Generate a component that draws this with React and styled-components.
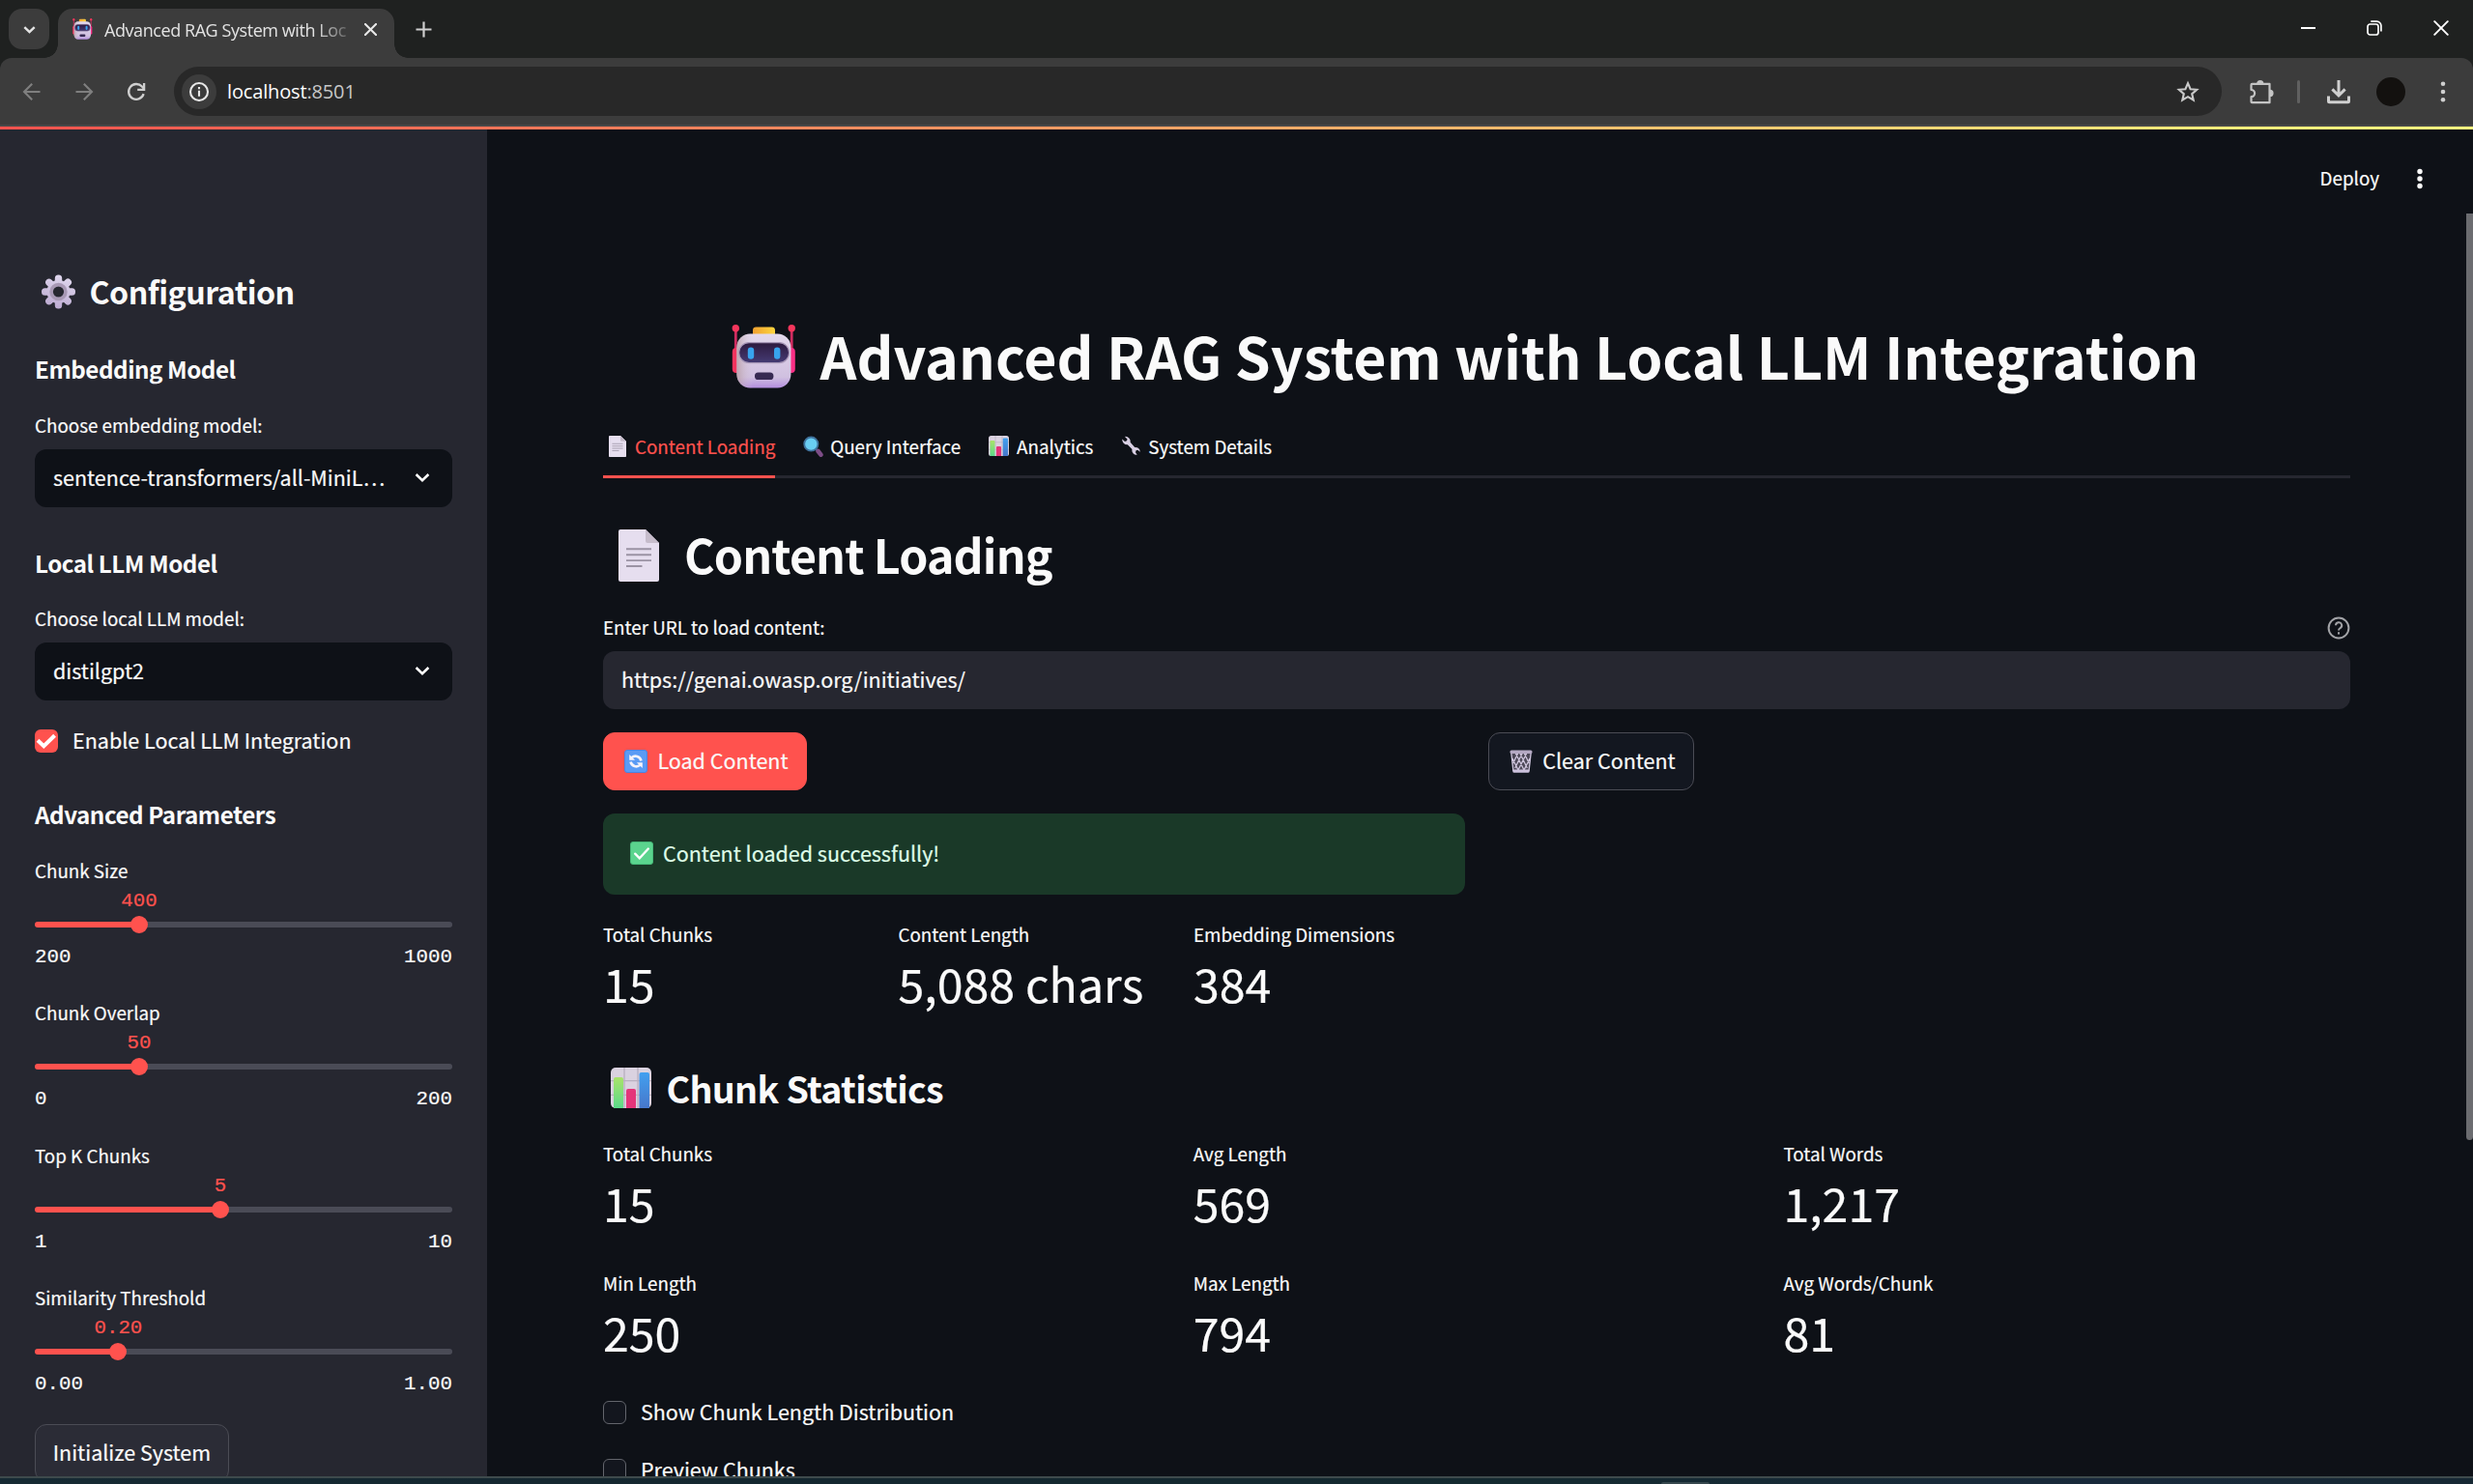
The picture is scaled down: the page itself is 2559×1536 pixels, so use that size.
import React, { useId } from 'react';
import styled, { createGlobalStyle } from 'styled-components';

const sans = '"Noto Sans CJK SC", "Noto Sans", sans-serif';
const mono = '"Liberation Mono", monospace';
const chromeFont = '"Open Sans", "Noto Sans", sans-serif';
const red = '#ff524e';

const GlobalStyle = createGlobalStyle`
  * { box-sizing: border-box; }
  html, body { margin: 0; padding: 0; background: #0e1117; overflow: hidden; }
  svg { display: block; flex: none; }
`;

const Window = styled.div`
  width: 2559px;
  height: 1536px;
  display: flex;
  flex-direction: column;
  overflow: hidden;
  color: #fafafa;
  font-family: ${sans};
`;

/* ---------- browser frame ---------- */

const TabStrip = styled.div`
  height: 60px;
  flex: none;
  background: #1f2120;
  display: flex;
  align-items: flex-start;
  padding-top: 9px;
`;

const TabSearch = styled.div`
  width: 42px;
  height: 42px;
  margin-left: 9px;
  border-radius: 14px;
  background: #3c3c3c;
  display: flex;
  align-items: center;
  justify-content: center;
`;

const BrowserTab = styled.div`
  position: relative;
  width: 348px;
  height: 51px;
  margin-left: 9px;
  padding: 0 18px 9px 15px;
  border-radius: 15px 15px 0 0;
  background: #3c3c3c;
  display: flex;
  align-items: center;
  &::before,
  &::after {
    content: '';
    position: absolute;
    bottom: 0;
    width: 14px;
    height: 14px;
  }
  &::before {
    left: -14px;
    background: radial-gradient(circle at 0 0, transparent 13.5px, #3c3c3c 14px);
  }
  &::after {
    right: -14px;
    background: radial-gradient(circle at 100% 0, transparent 13.5px, #3c3c3c 14px);
  }
`;

const TabTitle = styled.div`
  width: 254px;
  margin-left: 12px;
  margin-top: 2px;
  white-space: nowrap;
  font: 400 18px/24px ${chromeFont};
  letter-spacing: -0.43px;
  color: #e3e3e3;
  mask-image: linear-gradient(90deg, #000 86%, transparent 103%);
`;

const TabClose = styled.div`
  margin-left: auto;
`;

const NewTab = styled.div`
  margin: 13px 0 0 22px;
`;

const WindowControls = styled.div`
  display: flex;
  gap: 53px;
  margin: 12px 25px 0 auto;
`;

const Toolbar = styled.div`
  height: 71px;
  flex: none;
  background: #1f2120;
  border-bottom: 2px solid #484848;
`;

const ToolbarInner = styled.div`
  height: 69px;
  padding: 9px 28px 0 23px;
  border-radius: 12px 12px 0 0;
  background: #3c3c3c;
  display: flex;
  align-items: flex-start;
`;

const NavButtons = styled.div`
  height: 51px;
  width: 157px;
  display: flex;
  align-items: center;
  gap: 34px;
`;

const AddressBar = styled.div`
  width: 2119px;
  height: 51px;
  border-radius: 26px;
  background: #282828;
  display: flex;
  align-items: center;
  padding: 0 23px 0 8px;
`;

const SiteInfo = styled.div`
  width: 36px;
  height: 36px;
  border-radius: 50%;
  background: #3c3c3c;
  display: flex;
  align-items: center;
  justify-content: center;
`;

const Address = styled.div`
  margin-left: 11px;
  flex: 1;
  font: 400 20px/30px ${chromeFont};
  letter-spacing: -0.15px;
  color: #fff;
`;

const Port = styled.span`
  color: #c7c7c7;
`;

const ToolbarActions = styled.div`
  height: 51px;
  margin-left: auto;
  display: flex;
  align-items: center;
`;

const ActionDivider = styled.div`
  width: 3px;
  height: 24px;
  margin: 0 28px 0 24px;
  border-radius: 2px;
  background: #606060;
`;

const Avatar = styled.div`
  width: 30px;
  height: 30px;
  margin: 0 36px 0 27px;
  border-radius: 50%;
  background: #13110f;
`;

const Decoration = styled.div`
  height: 3px;
  flex: none;
  background: linear-gradient(90deg, ${red}, #fffd80);
`;

/* ---------- app ---------- */

const AppBody = styled.div`
  height: 1394px;
  flex: none;
  display: flex;
  overflow: hidden;
  background: #0e1117;
  -webkit-text-stroke: 0.2px;
`;

const Sidebar = styled.aside`
  width: 504px;
  flex: none;
  padding: 145px 36px 0;
  background: #262730;
  display: flex;
  flex-direction: column;
`;

const SidebarTitle = styled.h2`
  margin: 0;
  height: 44px;
  padding-left: 6px;
  display: flex;
  align-items: center;
  gap: 13.5px;
  font-size: 32.2px;
  line-height: 44px;
  font-weight: 700;
  letter-spacing: -0.016em;
  -webkit-text-stroke: 0;
  svg { margin-top: 2px; }
`;

const SectionTitle = styled.h3`
  margin: ${(p) => p.$top}px 0 0;
  height: 32px;
  font-size: 24.2px;
  line-height: 32px;
  font-weight: 700;
  letter-spacing: -0.0195em;
  -webkit-text-stroke: 0;
`;

const FieldLabel = styled.div`
  height: 30px;
  font-size: 18.8px;
  line-height: 30px;
  white-space: nowrap;
`;

const Field = styled.div`
  margin-top: ${(p) => p.$top}px;
`;

const Select = styled.div`
  height: 60px;
  margin-top: 10px;
  padding: 0 23px 2px 19px;
  border-radius: 12px;
  background: #0e1117;
  display: flex;
  align-items: center;
  justify-content: space-between;
  font-size: 21.5px;
  line-height: 36px;
  white-space: nowrap;
`;

const CheckRow = styled.label`
  height: 36px;
  margin-top: ${(p) => p.$top}px;
  display: flex;
  align-items: center;
  gap: 15px;
  font-size: 21.5px;
  line-height: 36px;
  white-space: nowrap;
`;

const CheckBox = styled.span`
  width: 24px;
  height: 24px;
  margin-top: 2px;
  border-radius: 6px;
  border: ${(p) => (p.$checked ? 'none' : '1.5px solid #63656c')};
  background: ${(p) => (p.$checked ? red : '#13161e')};
  display: flex;
  align-items: center;
  justify-content: center;
`;

const SliderList = styled.div`
  margin-top: 27px;
  display: flex;
  flex-direction: column;
  gap: 29.4px;
`;

const SliderField = styled.div`
  height: 118px;
`;

const SliderValue = styled.div`
  position: relative;
  left: ${(p) => p.$at}%;
  width: 80px;
  height: 24px;
  margin: 5px 0 0 -40px;
  text-align: center;
  font: 400 20.8px/24px ${mono};
  color: ${red};
`;

const Track = styled.div`
  position: relative;
  height: 6px;
  margin-top: 9px;
  border-radius: 3px;
  background: linear-gradient(90deg, ${red} ${(p) => p.$at}%, #4a4b56 ${(p) => p.$at}%);
`;

const Thumb = styled.div`
  position: absolute;
  left: calc(${(p) => p.$at}% - 9px);
  top: -6px;
  width: 18px;
  height: 18px;
  border-radius: 50%;
  background: ${red};
`;

const SliderRange = styled.div`
  margin-top: 19px;
  height: 24px;
  display: flex;
  justify-content: space-between;
  font: 400 20.8px/24px ${mono};
`;

const Button = styled.button`
  height: 60px;
  flex: none;
  padding: 0 0 2px ${(p) => (p.$side ? 0 : 3)}px;
  width: ${(p) => p.$width}px;
  border-radius: 12px;
  border: 1.5px solid ${(p) => (p.$primary ? red : '#4b4c55')};
  background: ${(p) => (p.$primary ? red : p.$side ? '#2b2c36' : '#131720')};
  color: #fafafa;
  font: 400 21.5px/36px ${sans};
  -webkit-text-stroke: 0.2px;
  display: flex;
  align-items: center;
  justify-content: center;
  gap: 10px;
  white-space: nowrap;
  svg { margin-top: 1px; }
`;

const SidebarAction = styled.div`
  margin-top: 28px;
`;

const Main = styled.main`
  flex: 1;
  display: flex;
  flex-direction: column;
  align-items: stretch;
`;

const AppHeader = styled.header`
  height: 87px;
  flex: none;
  padding: 35px 52px 0 0;
  display: flex;
  justify-content: flex-end;
  align-items: flex-start;
  gap: 39px;
  font-size: 18.8px;
  line-height: 30px;
`;

const MenuDots = styled.div`
  height: 32px;
  display: flex;
  align-items: center;
`;

const ScrollArea = styled.div`
  flex: 1;
  display: flex;
  justify-content: space-between;
`;

const ScrollThumb = styled.div`
  width: 7px;
  height: 959px;
  background: #6b6c70;
  border-radius: 0 0 4px 4px;
`;

const Page = styled.div`
  width: 1808px;
  margin-left: 120px;
  padding-top: 106px;
`;

const PageTitle = styled.h1`
  margin: 0;
  height: 80px;
  padding-left: 133px;
  display: flex;
  align-items: center;
  gap: 23.5px;
  font-size: 59.1px;
  line-height: 79px;
  font-weight: 700;
  white-space: nowrap;
  -webkit-text-stroke: 0;
  svg { margin-top: 3px; }
`;

const Tabs = styled.nav`
  height: 88px;
  display: flex;
  align-items: stretch;
  gap: 24px;
  padding-top: 40px;
  border-bottom: 3px solid #262730;
`;

const TabItem = styled.div`
  height: 48px;
  margin-bottom: -3px;
  padding-left: ${(p) => p.$inset || 5}px;
  display: flex;
  align-items: flex-start;
  gap: ${(p) => p.$gap}px;
  font-size: 18.8px;
  line-height: 29px;
  color: ${(p) => (p.$active ? red : '#fafafa')};
  border-bottom: 3px solid ${(p) => (p.$active ? red : 'transparent')};
  svg { margin-top: 4px; }
`;

const PageHeading = styled.h2`
  margin: 46px 0 0;
  height: 64px;
  padding-left: 16px;
  display: flex;
  align-items: center;
  gap: 26px;
  font-size: 48.3px;
  line-height: 64px;
  font-weight: 700;
  letter-spacing: -0.0175em;
  -webkit-text-stroke: 0;
  svg { margin-top: 3px; }
`;

const LabelRow = styled.div`
  height: 30px;
  margin-top: 29px;
  display: flex;
  align-items: center;
  justify-content: space-between;
  svg { margin-top: 2px; }
`;

const UrlInput = styled.div`
  height: 60px;
  margin-top: 10px;
  padding: 0 19px;
  border-radius: 12px;
  background: #262730;
  font-size: 21.5px;
  line-height: 58px;
`;

const ButtonRow = styled.div`
  margin-top: 24px;
  display: grid;
  grid-template-columns: 892px 892px;
  gap: 24px;
`;

const SuccessAlert = styled.div`
  width: 892px;
  height: 84px;
  margin-top: 24px;
  padding: 0 28px 2px;
  border-radius: 12px;
  background: #1a3928;
  color: #dffde9;
  display: flex;
  align-items: center;
  gap: 10px;
  font-size: 21.5px;
  line-height: 36px;
`;

const MetricGrid = styled.div`
  margin-top: ${(p) => p.$top}px;
  display: grid;
  grid-template-columns: repeat(3, ${(p) => p.$column}px);
  row-gap: 37px;
`;

const Metric = styled.div`
  height: 97px;
`;

const MetricValue = styled.div`
  margin-top: 3px;
  height: 64px;
  font-size: 48.3px;
  line-height: 64px;
  white-space: nowrap;
`;

const SubHeading = styled.h3`
  margin: 52px 0 0;
  height: 50px;
  padding-left: 8px;
  display: flex;
  align-items: center;
  gap: 15.5px;
  font-size: 37.6px;
  line-height: 50px;
  font-weight: 700;
  letter-spacing: -0.018em;
  -webkit-text-stroke: 0;
`;

const Taskbar = styled.div`
  height: 8px;
  flex: none;
  border-top: 2px solid #3e4a4c;
  background: linear-gradient(90deg, #162a33, #14272f 30%, #142a30 62%, #18293a 85%, #162833);
  display: flex;
  justify-content: flex-start;
`;

const TaskbarItem = styled.div`
  width: 50px;
  height: 2px;
  margin: 4px 0 0 1719px;
  border-radius: 4px 4px 0 0;
  background: #36474d;
`;

/* ---------- drawings ---------- */

const Chevron = ({ size = 16, color = '#fafafa', width = 2.6 }) => (
  <svg width={size} height={size} viewBox="0 0 16 16" fill="none" stroke={color} strokeWidth={width}>
    <path d="M1.6 5l6.4 6.2L14.4 5" />
  </svg>
);

const CrossIcon = ({ size, width, color = '#fff' }) => (
  <svg width={size} height={size} viewBox="0 0 16 16" fill="none" stroke={color} strokeWidth={width} strokeLinecap="round">
    <path d="M1.2 1.2l13.6 13.6M14.8 1.2L1.2 14.8" />
  </svg>
);

const PlusIcon = () => (
  <svg width="17" height="17" viewBox="0 0 17 17" stroke="#cfcfcf" strokeWidth="2.2">
    <path d="M8.5 0.5v16M0.5 8.5h16" />
  </svg>
);

const MinimizeIcon = () => (
  <svg width="15" height="16" viewBox="0 0 15 16" stroke="#fff" strokeWidth="2">
    <path d="M0 8h15" />
  </svg>
);

const RestoreIcon = () => (
  <svg width="16" height="16" viewBox="0 0 16 16" fill="none" stroke="#fff" strokeWidth="1.7">
    <rect x="1" y="4" width="11" height="11" rx="2.5" />
    <path d="M4.3 1.2h6.2a4.4 4.4 0 0 1 4.4 4.4v5.8" />
  </svg>
);

const Arrow = ({ flip }) => (
  <svg width="20" height="20" viewBox="0 0 20 20" fill="none" stroke="#7f7f7f" strokeWidth="2.1">
    {flip ? <path d="M1.5 10h16M9.8 1.8l8.2 8.2-8.2 8.2" /> : <path d="M18.5 10h-16M10.2 1.8L2 10l8.2 8.2" />}
  </svg>
);

const ReloadIcon = () => (
  <svg width="20" height="20" viewBox="0 0 20 20" fill="none" stroke="#cfcfcf" strokeWidth="2.3">
    <path d="M17.6 12.2A7.9 7.9 0 1 1 15.9 4.6L18 7" />
    <path d="M18.1 1v6.9h-6.9" />
  </svg>
);

const InfoIcon = () => (
  <svg width="22" height="22" viewBox="0 0 22 22" fill="none" stroke="#e8e8e8" strokeWidth="2.1">
    <circle cx="11" cy="11" r="9" />
    <path d="M11 9.8v6M11 6v2.2" />
  </svg>
);

const StarIcon = () => (
  <svg width="24" height="24" viewBox="0 0 24 24" fill="none" stroke="#c9c9c9" strokeWidth="2.1">
    <path d="M12 3.2l2.6 6 6.6.6-5 4.3 1.5 6.4L12 17.1l-5.7 3.4 1.5-6.4-5-4.3 6.6-.6z" />
  </svg>
);

const PuzzleIcon = () => (
  <svg width="26" height="26" viewBox="0 0 26 26">
    <path d="M3.5 4.8h18v19.4h-18q-1 0-1-1v-5a3.6 3.6 0 0 0 0-7.2V5.8q0-1 1-1z" fill="none" stroke="#c4c4c4" strokeWidth="2.2" strokeLinejoin="round" />
    <path d="M8.2 4.5a3.6 3.6 0 0 1 7.2 0zM22 10.8a3.6 3.6 0 0 1 0 7.2z" fill="#c4c4c4" />
  </svg>
);

const DownloadIcon = () => (
  <svg width="24" height="26" viewBox="0 0 24 26" fill="none" stroke="#cfcfcf" strokeWidth="3">
    <path d="M12 1v15.5M5.4 10.4l6.6 6.6 6.6-6.6" />
    <path d="M1.5 17.5v5.2q0 1 1 1h19q1 0 1-1v-5.2" />
  </svg>
);

const DotsIcon = ({ color, step, r }) => (
  <svg width="6" height="26" viewBox="0 0 6 26" fill={color}>
    <circle cx="3" cy={13 - step} r={r} />
    <circle cx="3" cy="13" r={r} />
    <circle cx="3" cy={13 + step} r={r} />
  </svg>
);

const CheckMark = () => (
  <svg width="24" height="24" viewBox="0 0 24 24" fill="none" stroke="#fff" strokeWidth="4">
    <path d="M3 11.3l6.3 6L20.6 6.3" />
  </svg>
);

const HelpIcon = () => (
  <svg width="24" height="24" viewBox="0 0 24 24" fill="none" stroke="#a2a3a7" strokeWidth="2">
    <circle cx="12" cy="12" r="10.4" />
    <path d="M9 9.3a3.1 3.1 0 1 1 4.6 2.7c-1.1.7-1.6 1.2-1.6 2.4" />
    <path d="M12 16.3v2.1" />
  </svg>
);

const GearIcon = () => {
  const id = useId();
  return (
    <svg width="37" height="36" viewBox="0 0 36 36">
      <defs>
        <linearGradient id={id} gradientUnits="userSpaceOnUse" x1="24" y1="0" x2="12" y2="36">
          <stop offset="0" stopColor="#e0d8ee" />
          <stop offset="1" stopColor="#bba9d0" />
        </linearGradient>
        <clipPath id={`${id}c`}>
          {[0, 45, 90, 135].map((a) => (
            <rect key={a} x="14.3" y="0.5" width="7.4" height="35" rx="3.5" transform={`rotate(${a} 18 18)`} />
          ))}
          <circle cx="18" cy="18" r="12" />
        </clipPath>
      </defs>
      <rect width="36" height="36" fill={`url(#${id})`} clipPath={`url(#${id}c)`} />
      <circle cx="18" cy="18" r="7.4" fill="none" stroke="#a899b5" strokeWidth="3.6" />
      <circle cx="18" cy="18" r="5.6" fill="#262730" />
    </svg>
  );
};

const RobotIcon = ({ width = 68, height = 66 }) => {
  const id = useId();
  return (
    <svg width={width} height={height} viewBox="0 0 68 66" preserveAspectRatio="none">
      <defs>
        <linearGradient id={`${id}f`} x1="0" y1="0" x2="0" y2="1">
          <stop offset="0" stopColor="#e3d9ec" />
          <stop offset="0.8" stopColor="#d0c0e0" />
          <stop offset="1" stopColor="#b48ede" />
        </linearGradient>
        <linearGradient id={`${id}s`} x1="0" y1="0" x2="1" y2="0">
          <stop offset="0" stopColor="#b59a9e" stopOpacity="0.75" />
          <stop offset="0.3" stopColor="#d8c8dc" stopOpacity="0" />
        </linearGradient>
        <linearGradient id={`${id}v`} x1="0" y1="0" x2="0" y2="1">
          <stop offset="0" stopColor="#2d1a3e" />
          <stop offset="1" stopColor="#453b74" />
        </linearGradient>
        <linearGradient id={`${id}y`} x1="0" y1="0" x2="1" y2="0">
          <stop offset="0" stopColor="#f0a030" />
          <stop offset="1" stopColor="#fcd53e" />
        </linearGradient>
      </defs>
      <path d="M4.3 4v26M62.2 4v26" stroke="#cf2c60" strokeWidth="2.8" />
      <circle cx="4.3" cy="3.8" r="3.7" fill="#f5365c" />
      <circle cx="62.2" cy="3.8" r="3.7" fill="#f5365c" />
      <rect x="0.8" y="24" width="9" height="26" rx="4" fill="#f2335d" />
      <rect x="56.8" y="24" width="9" height="26" rx="4" fill="#fa2f86" />
      <rect x="22" y="2.5" width="23" height="10" rx="3.4" fill={`url(#${id}y)`} />
      <rect x="5.4" y="9.5" width="56" height="56" rx="14" fill={`url(#${id}f)`} />
      <rect x="5.4" y="9.5" width="56" height="56" rx="14" fill={`url(#${id}s)`} />
      <rect x="7.6" y="18.6" width="52" height="21" rx="10.5" fill={`url(#${id}v)`} stroke="#a898b8" strokeWidth="1.2" />
      <rect x="16.8" y="23.4" width="6.4" height="12.4" rx="3.2" fill="#38a4ee" />
      <rect x="44" y="23.4" width="6.4" height="12.4" rx="3.2" fill="#38a4ee" />
      <rect x="24" y="49.4" width="19.4" height="7.6" rx="3.6" fill="#372a52" />
    </svg>
  );
};

const DocumentIcon = ({ width, height }) => (
  <svg width={width} height={height} viewBox="0 0 42 54" preserveAspectRatio="none">
    <path d="M2 0h26l14 14v38q0 2-2 2H2q-2 0-2-2V2q0-2 2-2z" fill="#e6deef" />
    <path d="M28 0l14 14H30q-2 0-2-2z" fill="#c6bccb" />
    <path d="M8 20.3h26M8 26.3h26M8 32.1h26M8 38h16.5" stroke="#9b93a4" strokeWidth="1.9" />
  </svg>
);

const MagnifierIcon = () => (
  <svg width="21" height="22" viewBox="0 0 21 22">
    <path d="M13.5 14l2.8 3" stroke="#5b6a96" strokeWidth="2.4" />
    <path d="M15.6 16l2.8 3.6" stroke="#7d4d87" strokeWidth="4.6" strokeLinecap="round" />
    <circle cx="8.3" cy="8.6" r="7.1" fill="#69cdf2" stroke="#3f729d" strokeWidth="1.8" />
  </svg>
);

const ChartIcon = ({ size }) => {
  const id = useId();
  return (
    <svg width={size} height={size} viewBox="0 0 42 42">
      <defs>
        <linearGradient id={`${id}g`} x1="0" y1="0" x2="0" y2="1">
          <stop offset="0" stopColor="#a9e36a" />
          <stop offset="1" stopColor="#5bd98a" />
        </linearGradient>
        <linearGradient id={`${id}b`} x1="0" y1="0" x2="0" y2="1">
          <stop offset="0" stopColor="#42a0f0" />
          <stop offset="1" stopColor="#4777ca" />
        </linearGradient>
      </defs>
      <rect width="42" height="42" rx="5" fill="#dad2e0" />
      <path d="M14 0v42M28 0v42M0 13.6h42M0 28.4h42" stroke="#b9b0c0" strokeWidth="1.3" />
      <path d="M3 42V12q0-2 2-2h6q2 0 2 2v30z" fill={`url(#${id}g)`} />
      <path d="M16 42V24q0-2 2-2h6q2 0 2 2v18z" fill="#e4357a" />
      <path d="M29.5 42V7q0-2 2-2h6.5q2 0 2 2v35z" fill={`url(#${id}b)`} />
    </svg>
  );
};

const WrenchIcon = () => (
  <svg width="21" height="21" viewBox="0 0 21 21">
    <path d="M1.3 3.6L4 6 6 5.3 6.5 3.5 4 0.9A5 5 0 0 1 9.600 6.800L14.200 12A4.600 4.600 0 0 1 19.700 16.700L17.300 14.700 15.500 15.300 15 17.300 16.700 19.700A4.600 4.600 0 0 1 11.500 14L6.800 9.200A5 5 0 0 1 1.300 3.600z" fill="#d8cfe3" />
  </svg>
);

const RefreshIcon = () => (
  <svg width="24" height="24" viewBox="0 0 24 24">
    <rect x="0.5" y="0.5" width="23" height="23" rx="2.5" fill="#5a9bf5" stroke="#4a83e2" />
    <g fill="none" stroke="#f4f2fa" strokeWidth="2.7">
      <path d="M7.5 8.2c3.4-2.7 9-1.6 9.9 3.3" />
      <path d="M16.5 15.8c-3.4 2.7-9 1.6-9.9-3.3" />
    </g>
    <path d="M5.2 5v5.8h5.9zM18.8 19v-5.8h-5.9z" fill="#f4f2fa" />
  </svg>
);

const GreenCheckIcon = () => (
  <svg width="24" height="24" viewBox="0 0 24 24">
    <rect x="0.5" y="0.5" width="23" height="23" rx="2.5" fill="#5bd48e" stroke="#46b878" />
    <path d="M5.2 12.6l4.6 4.7 9-9.8" fill="none" stroke="#fff" strokeWidth="2.3" strokeLinecap="round" />
  </svg>
);

const TrashIcon = () => (
  <svg width="24" height="24" viewBox="0 0 24 24">
    <path d="M1.5 2.5h21L20.3 23H3.7z" fill="#4d4858" />
    <path d="M1.8 3l2.1 19M22.2 3l-2.1 19M6 3l9.5 19M10.5 3l7.8 16M15 3l5.2 11M18 3L8.5 22M13.5 3L5.7 19M9 3L3.8 14M3 9l6.5 13M21 9l-6.500 13" stroke="#cfc5dd" strokeWidth="1.3" fill="none" />
    <rect x="0.5" y="0.5" width="23" height="3.4" rx="1.5" fill="#b5a9c4" />
    <rect x="3.4" y="20.5" width="17.2" height="3.2" rx="1.3" fill="#cdc2dd" />
  </svg>
);

/* ---------- content ---------- */

const sliders = [
  { label: 'Chunk Size', value: '400', at: 25, min: '200', max: '1000' },
  { label: 'Chunk Overlap', value: '50', at: 25, min: '0', max: '200' },
  { label: 'Top K Chunks', value: '5', at: 44.44, min: '1', max: '10' },
  { label: 'Similarity Threshold', value: '0.20', at: 20, min: '0.00', max: '1.00' },
];

const loadMetrics = [
  ['Total Chunks', '15'],
  ['Content Length', '5,088 chars'],
  ['Embedding Dimensions', '384'],
];

const chunkMetrics = [
  ['Total Chunks', '15'],
  ['Avg Length', '569'],
  ['Total Words', '1,217'],
  ['Min Length', '250'],
  ['Max Length', '794'],
  ['Avg Words/Chunk', '81'],
];

const Metrics = ({ items, column, top }) => (
  <MetricGrid $column={column} $top={top}>
    {items.map(([label, value]) => (
      <Metric key={label}>
        <FieldLabel>{label}</FieldLabel>
        <MetricValue>{value}</MetricValue>
      </Metric>
    ))}
  </MetricGrid>
);

const Slider = ({ label, value, at, min, max }) => (
  <SliderField>
    <FieldLabel>{label}</FieldLabel>
    <SliderValue $at={at}>{value}</SliderValue>
    <Track $at={at}>
      <Thumb $at={at} />
    </Track>
    <SliderRange>
      <span>{min}</span>
      <span>{max}</span>
    </SliderRange>
  </SliderField>
);

export default function App() {
  return (
    <Window>
      <GlobalStyle />
      <TabStrip>
        <TabSearch>
          <Chevron size={13} color="#e3e3e3" width={3} />
        </TabSearch>
        <BrowserTab>
          <RobotIcon width={21} height={22} />
          <TabTitle>Advanced RAG System with Loc</TabTitle>
          <TabClose>
            <CrossIcon size={13} width={2.6} color="#e8e8e8" />
          </TabClose>
        </BrowserTab>
        <NewTab>
          <PlusIcon />
        </NewTab>
        <WindowControls>
          <MinimizeIcon />
          <RestoreIcon />
          <CrossIcon size={16} width={1.9} />
        </WindowControls>
      </TabStrip>
      <Toolbar>
        <ToolbarInner>
          <NavButtons>
            <Arrow />
            <Arrow flip />
            <ReloadIcon />
          </NavButtons>
          <AddressBar>
            <SiteInfo>
              <InfoIcon />
            </SiteInfo>
            <Address>
              localhost<Port>:8501</Port>
            </Address>
            <StarIcon />
          </AddressBar>
          <ToolbarActions>
            <PuzzleIcon />
            <ActionDivider />
            <DownloadIcon />
            <Avatar />
            <DotsIcon color="#cfcfcf" step={8.3} r={2.3} />
          </ToolbarActions>
        </ToolbarInner>
      </Toolbar>
      <Decoration />
      <AppBody>
        <Sidebar>
          <SidebarTitle>
            <GearIcon />
            Configuration
          </SidebarTitle>
          <SectionTitle $top={43}>Embedding Model</SectionTitle>
          <Field $top={27}>
            <FieldLabel>Choose embedding model:</FieldLabel>
            <Select>
              sentence-transformers/all-MiniL…
              <Chevron />
            </Select>
          </Field>
          <SectionTitle $top={42}>Local LLM Model</SectionTitle>
          <Field $top={26}>
            <FieldLabel>Choose local LLM model:</FieldLabel>
            <Select>
              distilgpt2
              <Chevron />
            </Select>
          </Field>
          <CheckRow $top={23}>
            <CheckBox $checked>
              <CheckMark />
            </CheckBox>
            Enable Local LLM Integration
          </CheckRow>
          <SectionTitle $top={43}>Advanced Parameters</SectionTitle>
          <SliderList>
            {sliders.map((s) => (
              <Slider key={s.label} {...s} />
            ))}
          </SliderList>
          <SidebarAction>
            <Button $width={201} $side>Initialize System</Button>
          </SidebarAction>
        </Sidebar>
        <Main>
          <AppHeader>
            <span>Deploy</span>
            <MenuDots>
              <DotsIcon color="#fafafa" step={7.5} r={2.7} />
            </MenuDots>
          </AppHeader>
          <ScrollArea>
            <Page>
              <PageTitle>
                <RobotIcon />
                Advanced RAG System with Local LLM Integration
              </PageTitle>
              <Tabs>
                <TabItem $active $inset={6} $gap={9}>
                  <DocumentIcon width={18} height={22} />
                  Content Loading
                </TabItem>
                <TabItem $gap={7}>
                  <MagnifierIcon />
                  Query Interface
                </TabItem>
                <TabItem $gap={8}>
                  <ChartIcon size={21} />
                  Analytics
                </TabItem>
                <TabItem $gap={7}>
                  <WrenchIcon />
                  System Details
                </TabItem>
              </Tabs>
              <PageHeading>
                <DocumentIcon width={42} height={54} />
                Content Loading
              </PageHeading>
              <LabelRow>
                <FieldLabel>Enter URL to load content:</FieldLabel>
                <HelpIcon />
              </LabelRow>
              <UrlInput>https://genai.owasp.org/initiatives/</UrlInput>
              <ButtonRow>
                <Button $width={211} $primary>
                  <RefreshIcon />
                  Load Content
                </Button>
                <Button $width={213}>
                  <TrashIcon />
                  Clear Content
                </Button>
              </ButtonRow>
              <SuccessAlert>
                <GreenCheckIcon />
                Content loaded successfully!
              </SuccessAlert>
              <Metrics items={loadMetrics} column={305.5} top={26} />
              <SubHeading>
                <ChartIcon size={42} />
                Chunk Statistics
              </SubHeading>
              <Metrics items={chunkMetrics} column={610.7} top={28} />
              <CheckRow $top={33}>
                <CheckBox />
                Show Chunk Length Distribution
              </CheckRow>
              <CheckRow $top={24}>
                <CheckBox />
                Preview Chunks
              </CheckRow>
            </Page>
            <ScrollThumb />
          </ScrollArea>
        </Main>
      </AppBody>
      <Taskbar>
        <TaskbarItem />
      </Taskbar>
    </Window>
  );
}
